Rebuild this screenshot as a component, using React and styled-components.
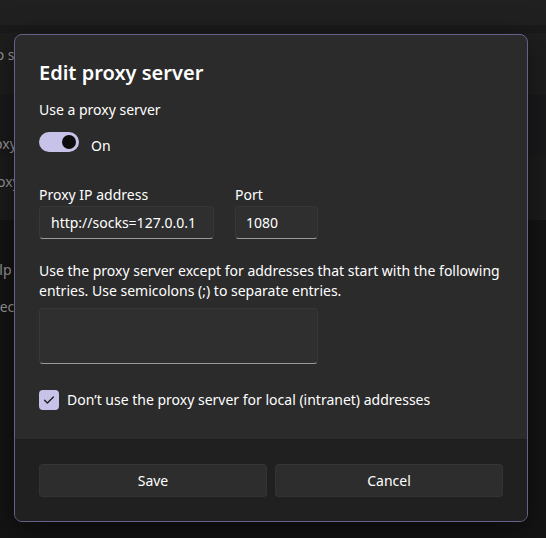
import React from "react";
import styled, { createGlobalStyle } from "styled-components";

const Global = createGlobalStyle`
  html, body { margin: 0; padding: 0; background: #141414; }
  body {
    font-family: "Noto Sans", "Open Sans", "DejaVu Sans", sans-serif;
    color: #ffffff;
    -webkit-font-smoothing: antialiased;
  }
  * { box-sizing: border-box; }
`;

const Page = styled.div`
  position: relative;
  width: 546px;
  height: 538px;
  overflow: hidden;
  background: #141414;
  display: flex;
  flex-direction: column;
`;

const TopBand = styled.div`
  height: 25px;
  background: #202020;
  flex: none;
`;

const Strip = styled.div`
  height: 8px;
  background: #1a1a1a;
  flex: none;
`;

const BgRow = styled.div`
  height: ${(p) => p.$h}px;
  background: ${(p) => p.$bg};
  display: flex;
  align-items: ${(p) => p.$align || "center"};
  padding-top: ${(p) => p.$pt || 0}px;
  padding-bottom: ${(p) => p.$pb || 0}px;
  flex: none;
  overflow: hidden;
`;

const BgText = styled.span`
  font-size: 14px;
  line-height: 20px;
  color: #9a9a9a;
  white-space: nowrap;
  margin-left: ${(p) => p.$offset}px;
`;

const BgLinks = styled.div`
  display: flex;
  flex-direction: column;
  gap: 17px;
  padding-top: 40px;
`;

const Overlay = styled.div`
  position: absolute;
  inset: 0;
  display: flex;
  align-items: flex-start;
  padding: 34px 0 0 14px;
`;

const Dialog = styled.div`
  width: 514px;
  height: 488px;
  background: #2b2b2b;
  border: 1px solid #64628a;
  border-radius: 8px;
  overflow: hidden;
  display: flex;
  flex-direction: column;
  box-shadow: 0 8px 32px rgba(0, 0, 0, 0.5);
`;

const Body = styled.div`
  flex: 1;
  padding: 24px 24px 0 24px;
  display: flex;
  flex-direction: column;
  align-items: flex-start;
`;

const Title = styled.h1`
  margin: 0;
  font-size: 20px;
  line-height: 28px;
  font-weight: 600;
  color: #ffffff;
`;

const Text = styled.div`
  font-size: 14px;
  line-height: 20px;
  color: #ffffff;
  margin-top: ${(p) => p.$mt || 0}px;
`;

const ToggleRow = styled.div`
  display: flex;
  align-items: center;
  gap: 12px;
  margin-top: 12px;
`;

const ToggleLabel = styled.span`
  font-size: 14px;
  line-height: 20px;
  color: #ffffff;
  position: relative;
  top: 4px;
`;

const Toggle = styled.div`
  width: 40px;
  height: 20px;
  border-radius: 10px;
  background: #c6c2e8;
  display: flex;
  align-items: center;
  justify-content: flex-end;
  padding: 0 3px;
`;

const Knob = styled.div`
  width: 14px;
  height: 14px;
  border-radius: 50%;
  background: #0d0d0d;
`;

const Fields = styled.div`
  display: grid;
  grid-template-columns: 175px 83px;
  column-gap: 21px;
  margin-top: 33px;
`;

const Field = styled.div`
  display: flex;
  flex-direction: column;
  gap: 1px;
`;

const InputBox = styled.div`
  height: ${(p) => p.$h || 33}px;
  width: ${(p) => (p.$w ? `${p.$w}px` : "auto")};
  background: #2f2f2f;
  border: 1px solid #383838;
  border-bottom-color: #9a9a9a;
  border-radius: 4px;
  padding: 0 10px 0 ${(p) => p.$pl || 10}px;
  display: flex;
  align-items: center;
  font-size: 14px;
  color: #ffffff;
  white-space: nowrap;
  overflow: hidden;
  margin-top: ${(p) => p.$mt || 0}px;
`;

const CheckRow = styled.label`
  display: flex;
  align-items: center;
  gap: 8px;
  margin-top: 26px;
  font-size: 14px;
  line-height: 20px;
`;

const CheckBox = styled.span`
  width: 20px;
  height: 20px;
  border-radius: 4px;
  background: #c6c2e8;
  display: flex;
  align-items: center;
  justify-content: center;
  flex: none;
`;

const Footer = styled.div`
  flex: none;
  height: 82px;
  background: #202020;
  border-top: 1px solid #1d1d1d;
  padding: 24px 24px 0 24px;
  display: grid;
  grid-template-columns: 1fr 1fr;
  column-gap: 8px;
  align-content: start;
`;

const Button = styled.button`
  height: 33px;
  background: #2d2d2d;
  border: 1px solid #333333;
  border-top-color: #363636;
  border-radius: 4px;
  color: #ffffff;
  font-family: inherit;
  font-size: 14px;
  line-height: 20px;
  padding: 0;
`;

export default function App() {
  return (
    <>
      <Global />
      <Page>
        <TopBand />
        <Strip />
        <BgRow $h={62} $bg="#1e1e1e" $align="flex-start" $pt={12}>
          <BgText $offset={-27}>Auto setup script</BgText>
        </BgRow>
        <BgRow $h={60} $bg="#1a1a1c" $align="flex-end" $pb={1}>
          <BgText $offset={-60}>Use a proxy server</BgText>
        </BgRow>
        <BgRow $h={65} $bg="#1c1c1c" $align="flex-start" $pt={17}>
          <BgText $offset={-70}>Manual proxy setup</BgText>
        </BgRow>
        <BgLinks>
          <BgText $offset={-44}>Get help</BgText>
          <BgText $offset={-8}>Security</BgText>
        </BgLinks>

        <Overlay>
          <Dialog role="dialog" aria-label="Edit proxy server">
            <Body>
              <Title>Edit proxy server</Title>
              <Text $mt={13}>Use a proxy server</Text>
              <ToggleRow>
                <Toggle>
                  <Knob />
                </Toggle>
                <ToggleLabel>On</ToggleLabel>
              </ToggleRow>
              <Fields>
                <Field>
                  <Text>Proxy IP address</Text>
                  <InputBox $pl={11}>http://socks=127.0.0.1</InputBox>
                </Field>
                <Field>
                  <Text>Port</Text>
                  <InputBox>1080</InputBox>
                </Field>
              </Fields>
              <Text $mt={22}>
                Use the proxy server except for addresses that start with the following
                <br />
                entries. Use semicolons (;) to separate entries.
              </Text>
              <InputBox $h={56} $w={279} $mt={7} />
              <CheckRow>
                <CheckBox>
                  <svg width="20" height="20" viewBox="0 0 20 20" fill="none">
                    <path
                      d="M5.6 10.2 L8.4 13 L14.4 7"
                      stroke="#1c1c1c"
                      strokeWidth="1.3"
                      strokeLinecap="round"
                      strokeLinejoin="round"
                    />
                  </svg>
                </CheckBox>
                Don’t use the proxy server for local (intranet) addresses
              </CheckRow>
            </Body>
            <Footer>
              <Button>Save</Button>
              <Button>Cancel</Button>
            </Footer>
          </Dialog>
        </Overlay>
      </Page>
    </>
  );
}
